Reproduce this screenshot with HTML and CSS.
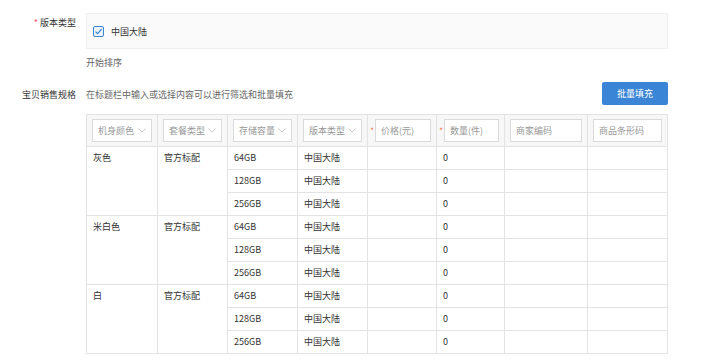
FILE: index.html
```html
<!DOCTYPE html>
<html lang="zh">
<head>
<meta charset="utf-8">
<link rel="stylesheet" href="styles.css">
</head>
<body>
<div class="page">
  <div class="form-row first">
    <div class="label"><span class="req">*</span> 版本类型</div>
    <div class="box">
      <span class="checkbox">
        <svg width="9" height="9" viewBox="0 0 9 9"><path d="M1.5 4.6 L3.6 6.6 L7.6 2.2" fill="none" stroke="#3a85d5" stroke-width="1.2"/></svg>
      </span>
      <span class="check-text">中国大陆</span>
    </div>
  </div>
  <div class="sort-row">开始排序</div>
  <div class="form-row spec">
    <div class="label">宝贝销售规格</div>
    <div class="desc">在标题栏中输入或选择内容可以进行筛选和批量填充</div>
    <button class="btn">批量填充</button>
  </div>
  <table class="sku">
    <colgroup>
      <col style="width:71px"><col style="width:70px"><col style="width:70px"><col style="width:70px">
      <col style="width:69px"><col style="width:68px"><col style="width:83px"><col style="width:80px">
    </colgroup>
    <thead>
      <tr>
        <th><div class="hcell"><div class="sel"><span>机身颜色</span><svg class="chev" width="8" height="5" viewBox="0 0 8 5"><path d="M0.5 0.5 L4 4.2 L7.5 0.5" fill="none" stroke="#b8b8b8" stroke-width="0.8"/></svg></div></div></th>
        <th><div class="hcell"><div class="sel"><span>套餐类型</span><svg class="chev" width="8" height="5" viewBox="0 0 8 5"><path d="M0.5 0.5 L4 4.2 L7.5 0.5" fill="none" stroke="#b8b8b8" stroke-width="0.8"/></svg></div></div></th>
        <th><div class="hcell"><div class="sel"><span>存储容量</span><svg class="chev" width="8" height="5" viewBox="0 0 8 5"><path d="M0.5 0.5 L4 4.2 L7.5 0.5" fill="none" stroke="#b8b8b8" stroke-width="0.8"/></svg></div></div></th>
        <th><div class="hcell"><div class="sel"><span>版本类型</span><svg class="chev" width="8" height="5" viewBox="0 0 8 5"><path d="M0.5 0.5 L4 4.2 L7.5 0.5" fill="none" stroke="#b8b8b8" stroke-width="0.8"/></svg></div></div></th>
        <th><div class="hcell star-cell"><span class="hreq">*</span><div class="sel"><span>价格(元)</span></div></div></th>
        <th><div class="hcell star-cell"><span class="hreq">*</span><div class="sel"><span>数量(件)</span></div></div></th>
        <th><div class="hcell"><div class="sel"><span>商家编码</span></div></div></th>
        <th><div class="hcell"><div class="sel"><span>商品条形码</span></div></div></th>
      </tr>
    </thead>
    <tbody>
      <tr><td rowspan="3" class="top">灰色</td><td rowspan="3" class="top">官方标配</td><td>64GB</td><td>中国大陆</td><td></td><td>0</td><td></td><td></td></tr>
      <tr><td>128GB</td><td>中国大陆</td><td></td><td>0</td><td></td><td></td></tr>
      <tr><td>256GB</td><td>中国大陆</td><td></td><td>0</td><td></td><td></td></tr>
      <tr><td rowspan="3" class="top">米白色</td><td rowspan="3" class="top">官方标配</td><td>64GB</td><td>中国大陆</td><td></td><td>0</td><td></td><td></td></tr>
      <tr><td>128GB</td><td>中国大陆</td><td></td><td>0</td><td></td><td></td></tr>
      <tr><td>256GB</td><td>中国大陆</td><td></td><td>0</td><td></td><td></td></tr>
      <tr><td rowspan="3" class="top">白</td><td rowspan="3" class="top">官方标配</td><td>64GB</td><td>中国大陆</td><td></td><td>0</td><td></td><td></td></tr>
      <tr><td>128GB</td><td>中国大陆</td><td></td><td>0</td><td></td><td></td></tr>
      <tr><td>256GB</td><td>中国大陆</td><td></td><td>0</td><td></td><td></td></tr>
    </tbody>
  </table>
</div>
</body>
</html>
```
FILE: styles.css
```css
* { box-sizing: border-box; }
html, body { margin: 0; padding: 0; background: #fff; }
body {
  font-family: "Noto Sans CJK SC", "Noto Sans", sans-serif;
  font-size: 9px;
  color: #333;
}
.page {
  padding-top: 13px;
  width: 720px;
}
.form-row {
  display: flex;
  align-items: flex-start;
}
.label {
  width: 76px;
  margin-right: 10px;
  text-align: right;
  color: #333;
  line-height: 12px;
}
.first .label { padding-top: 4px; }
.req { color: #e8576b; }
.box {
  width: 582px;
  height: 36px;
  background: #fafafa;
  border: 1px solid #f0f0f0;
  display: flex;
  align-items: center;
  padding-left: 6px;
}
.checkbox {
  width: 11px;
  height: 11px;
  border: 1px solid #3a85d5;
  border-radius: 2px;
  background: #eaf3fc;
  display: flex;
  align-items: center;
  justify-content: center;
}
.check-text {
  margin-left: 7px;
  color: #333;
}
.sort-row {
  margin-left: 86px;
  margin-top: 8px;
  line-height: 12px;
  color: #666;
}
.spec {
  margin-top: 13px;
  align-items: center;
  width: 668px;
}
.spec .label { padding-top: 3px; }
.desc {
  flex: 1;
  color: #666;
  line-height: 12px;
  padding-top: 3px;
}
.btn {
  width: 66px;
  height: 23px;
  border: none;
  border-radius: 2px;
  background: #3a85d5;
  color: #fff;
  font-family: inherit;
  font-size: 9px;
  padding: 0;
}
.sku {
  margin-left: 86px;
  margin-top: 9px;
  border-collapse: collapse;
  table-layout: fixed;
  width: 581px;
  border: 1px solid #dcdcdc;
}
.sku th, .sku td {
  border: 1px solid #e3e3e3;
  padding: 0;
}
.sku thead th {
  background: #f7f7f7;
  height: 32px;
  font-weight: normal;
}
.hcell {
  display: flex;
  align-items: center;
  padding: 0 5px 0 5px;
}
.star-cell { padding-left: 2px; }
.hreq {
  color: #f06a3c;
  width: 4px;
  margin-right: 1px;
  font-size: 8px;
  line-height: 8px;
}
.sel {
  flex: 1;
  height: 23px;
  background: #fff;
  border: 1px solid #dadada;
  display: flex;
  align-items: center;
  justify-content: space-between;
  padding: 0 5px 0 5px;
  color: #999;
  font-size: 9px;
  white-space: nowrap;
}
.chev {
  display: block;
  flex: none;
}
.sku tbody td {
  height: 23px;
  padding: 0 6px;
  line-height: 12px;
  color: #333;
  vertical-align: middle;
}
.sku tbody td.top {
  vertical-align: top;
  padding-top: 5px;
}
```
